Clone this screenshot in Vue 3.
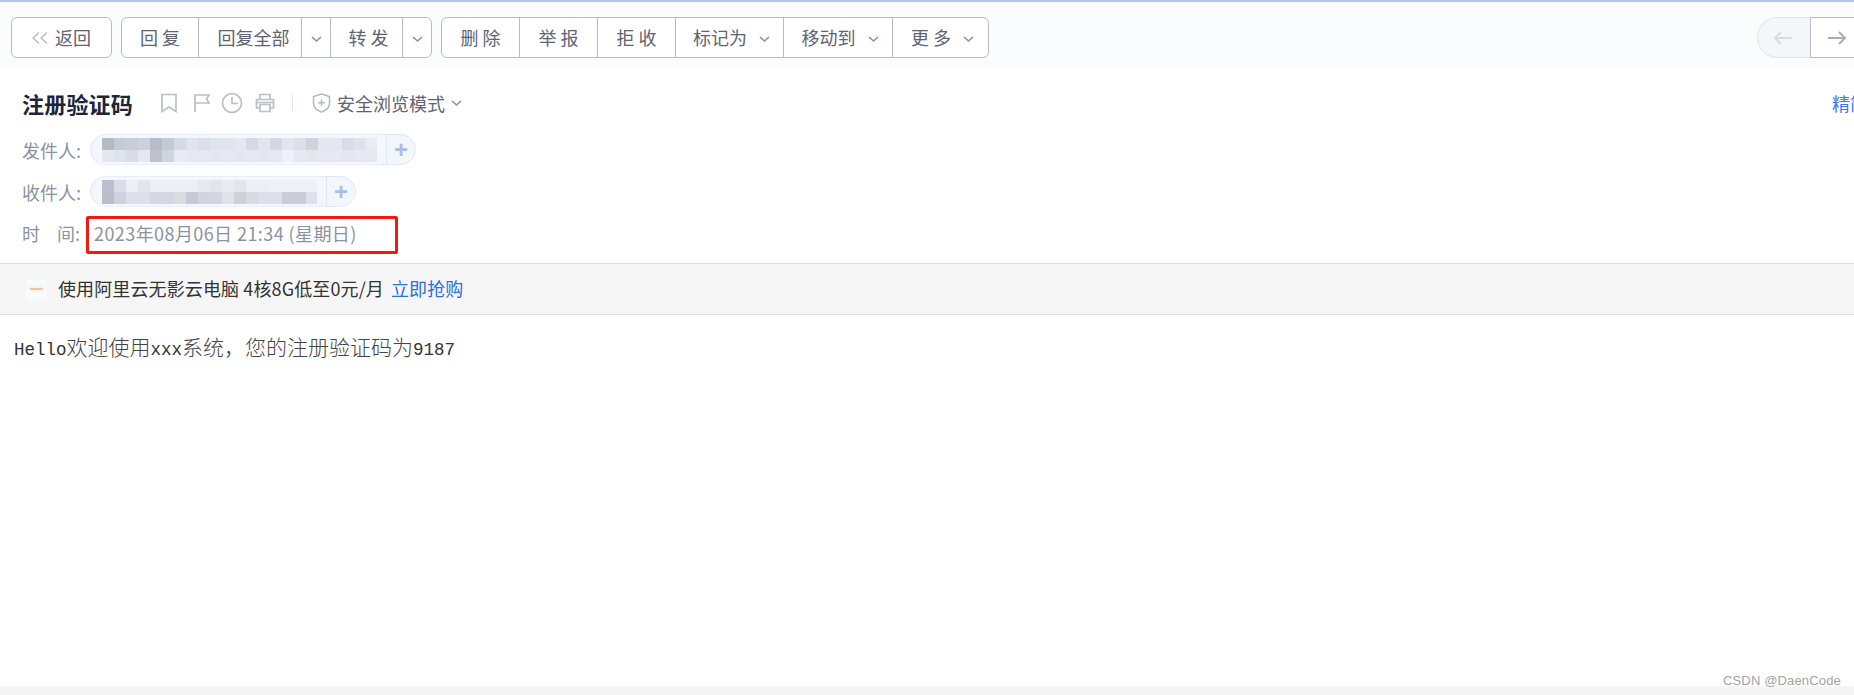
<script setup>
const chevron = 'M1 1l4.5 4L10 1'
const group1 = [
  { t: '回 复', w: 77 },
  { t: '回复全部', w: 103, pad: 7 },
  { w: 29, icon: true },
  { t: '转 发', w: 72, pad: 4 },
  { w: 28, icon: true }
]
const group2 = [
  { t: '删 除', w: 78 },
  { t: '举 报', w: 78 },
  { t: '拒 收', w: 78 },
  { t: '标记为', w: 108, arrow: true, pad: 4 },
  { t: '移动到', w: 109, arrow: true, pad: 4 },
  { t: '更 多', w: 95, arrow: true, pad: 4 }
]
const senderRows = [
  ['b5b9c6','c6cad6','c9cdd9','cdd1dc','b8bcca','c5c9d6','d6dae5','e0e4ed','dcdfe9','e0e4ed','e0e4ed','e4e7ef','d6d9e3','e0e4ed','d5d8e2','e2e5ee','dcdfe8','d0d3de','e4e7f0','e4e7f0','d9dce6','e0e3ec','e9ecf4'],
  ['e5e8f1','dfe3ed','d8dce7','e5e8f1','bdc1cd','d0d4df','e8ebf3','e6e9f2','e6e9f2','e4e7f0','e6e9f2','e4e7f0','e6e9f2','e4e7f0','e6e9f2','eef1f8','e6e9f2','e4e7f0','e6e9f2','e6e9f2','e4e7f0','e6e9f2','e6e9f2']
]
const receiverRows = [
  ['bcc0cc','dadde7','eceff6','e2e5ee','eceff6','eceff6','eceff6','eceff6','e6e9f2','e2e5ee','e8ebf3','e2e5ee','eceff6','eceff6','eef1f8','eef1f8','eef1f8','eef1f8'],
  ['b9bdc9','ced2dc','dde0ea','dde0ea','d5d8e2','d5d8e2','d8dcdf','c6cad5','d0d4de','d2d6e0','e0e3ec','cdd1db','d6dae3','dde0ea','dde0ea','c9cdd8','c9cdd8','dfe2ec']
]
const cellColor = (c) => ({ background: '#' + c })
const cellStyle = (b) => ({ width: b.w + 'px', paddingLeft: (b.pad || 0) + 'px' })
</script>

<template>
  <div class="page">
    <div class="toolbar">
      <button class="btn back">
        <svg class="back-mark" width="16" height="12" viewBox="0 0 16 12"><path d="M7 .5L1 6l6 5.500M15 .5L9 6l6 5.500" /></svg>
        <span>返回</span>
      </button>
      <div class="group">
        <div
          v-for="b in group1"
          :key="b.t || b.w"
          class="cell"
          :style="cellStyle(b)"
        >
          <svg v-if="b.icon" class="chev" width="11" height="7" viewBox="0 0 11 7"><path :d="chevron" /></svg>
          <template v-else>{{ b.t }}</template>
        </div>
      </div>
      <div class="group">
        <div
          v-for="b in group2"
          :key="b.t"
          class="cell"
          :style="cellStyle(b)"
        >
          <span>{{ b.t }}</span>
          <svg v-if="b.arrow" class="chev" width="11" height="7" viewBox="0 0 11 7"><path :d="chevron" /></svg>
        </div>
      </div>
      <div class="pager">
        <div class="prev">
          <svg width="20" height="16" viewBox="0 0 20 16"><path d="M19 8H2M8 2L2 8l6 6" /></svg>
        </div>
        <div class="next">
          <svg width="20" height="16" viewBox="0 0 20 16"><path d="M1 8h17M12 2l6 6-6 6" /></svg>
        </div>
      </div>
    </div>

    <div class="head">
      <div class="title-row">
        <h1 class="title">注册验证码</h1>
        <svg class="ic bookmark" width="18" height="20" viewBox="0 0 18 20"><path d="M2 1.500h14v17l-7-4.500-7 4.500z" /></svg>
        <svg class="ic flag" width="18" height="20" viewBox="0 0 18 20"><path d="M2 19V2h14l-2.500 4L16 10H2" /></svg>
        <svg class="ic clock" width="22" height="22" viewBox="0 0 22 22"><circle cx="11" cy="11" r="9.500" /><path d="M11 5v6.500h6" /></svg>
        <svg class="ic printer" width="20" height="20" viewBox="0 0 20 20"><path d="M5 6V1.500h10V6M5 15H1.500V6.500h17V15H15M5 11.500h10v7H5zM1.500 9.500h17" /></svg>
        <span class="sep"></span>
        <svg class="shield" width="19" height="20" viewBox="0 0 19 20"><path d="M9.500 1l8 2.500v7c0 4-3.500 7-8 8.500-4.500-1.500-8-4.500-8-8.500v-7zM9.500 6.500v6.500M6.250 9.750h6.500" /></svg>
        <span class="safe">安全浏览模式</span>
        <svg class="chev safe-chev" width="11" height="7" viewBox="0 0 11 7"><path :d="chevron" /></svg>
        <a class="simple">精简信息</a>
      </div>

      <div class="meta sender">
        <span class="label">发件人:</span>
        <div class="pill">
          <div class="mosaic">
            <div v-for="(row, r) in senderRows" :key="r" class="mrow">
              <i v-for="(c, i) in row" :key="i" :style="cellColor(c)"></i>
            </div>
          </div>
          <span class="plus">+</span>
        </div>
      </div>
      <div class="meta receiver">
        <span class="label">收件人:</span>
        <div class="pill short">
          <div class="mosaic">
            <div v-for="(row, r) in receiverRows" :key="r" class="mrow">
              <i v-for="(c, i) in row" :key="i" :style="cellColor(c)"></i>
            </div>
          </div>
          <span class="plus">+</span>
        </div>
      </div>
      <div class="meta time">
        <span class="label spaced"><span>时</span><span>间:</span></span>
        <span class="when">2023年08月06日 21:34 (星期日)</span>
        <span class="redbox"></span>
      </div>
    </div>

    <div class="ad">
      <span class="ad-logo"><i></i></span>
      <span>使用阿里云无影云电脑 4核8G低至0元/月</span>
      <a class="ad-link">立即抢购</a>
    </div>

    <div class="body-text">
      <span class="m">Hello</span><span class="c">欢迎使用</span><span class="m">xxx</span><span class="c">系统，您的注册验证码为</span><span class="m">9187</span>
    </div>

    <div class="scroll"></div>
    <div class="mark">CSDN @DaenCode</div>
  </div>
</template>

<style scoped>
.page {
  position: relative;
  width: 1854px;
  height: 695px;
  overflow: hidden;
  background: #fff;
  display: flex;
  flex-direction: column;
  font-family: "Noto Sans CJK SC", "Liberation Sans", sans-serif;
  font-size: 18px;
}
.toolbar {
  flex: none;
  box-sizing: border-box;
  border-top: 2px solid #aec4ee;
  height: 70px;
  background: #fbfcfe;
  padding: 15px 0 0 11px;
  display: flex;
  gap: 9px;
  align-items: flex-start;
}
.btn, .group {
  height: 41px;
  box-sizing: border-box;
  border: 1px solid #b6bbc8;
  border-radius: 6px;
  background: #fff;
  color: #5e6473;
  font: inherit;
  line-height: 1;
}
.back {
  width: 101px;
  padding: 0 0 2px 0;
  display: flex;
  align-items: center;
  justify-content: center;
  gap: 7px;
}
.back-mark {
  margin-top: 2px;
}
.back-mark path {
  fill: none;
  stroke: #b0b5c2;
  stroke-width: 1.2;
}
.group {
  display: flex;
}
.cell {
  box-sizing: border-box;
  display: flex;
  align-items: center;
  justify-content: center;
  gap: 12px;
  border-right: 1px solid #b6bbc8;
  white-space: pre;
  padding-bottom: 2px;
}
.cell:last-child {
  border-right: none;
}
.chev path {
  fill: none;
  stroke: #8c919e;
  stroke-width: 1.6;
}
.cell .chev {
  margin-top: 5px;
}
.pager {
  margin-left: auto;
  margin-right: -24px;
  display: flex;
  height: 41px;
}
.pager path {
  fill: none;
  stroke-width: 2;
}
.prev {
  width: 53px;
  box-sizing: border-box;
  border: 1px solid #e1e4ea;
  border-right: none;
  border-radius: 21px 0 0 21px;
  background: #f5f6fa;
  display: flex;
  align-items: center;
  justify-content: flex-end;
  padding-right: 17px;
}
.prev path {
  stroke: #d9dbe1;
}
.next {
  width: 68px;
  box-sizing: border-box;
  border: 1px solid #b6bbc8;
  border-radius: 0 21px 21px 0;
  background: #fff;
  display: flex;
  align-items: center;
  padding-left: 16px;
}
.next path {
  stroke: #a9adb8;
}
.head {
  height: 193px;
  flex: none;
  padding-left: 22px;
  box-sizing: border-box;
}
.title-row {
  height: 30px;
  margin-top: 18px;
  display: flex;
  align-items: center;
}
.title {
  margin: 0;
  font-size: 22px;
  line-height: 30px;
  font-weight: 700;
  letter-spacing: 0.2px;
  color: #1e2538;
}
.ic {
  flex: none;
}
.ic path, .ic circle {
  fill: none;
  stroke: #bcbfc7;
  stroke-width: 1.7;
}
.bookmark { margin-left: 27px; }
.flag { margin-left: 15px; }
.clock { margin-left: 10px; }
.printer { margin-left: 12px; }
.sep {
  width: 1px;
  height: 16px;
  margin-left: 17px;
  background: #dfe3ec;
}
.shield {
  margin-left: 19px;
}
.shield path {
  fill: none;
  stroke: #b4b7bf;
  stroke-width: 1.5;
}
.safe {
  margin-left: 6px;
  color: #5e6473;
}
.safe-chev {
  margin-left: 6px;
}
.simple {
  position: absolute;
  left: 1832px;
  top: 88px;
  line-height: 30px;
  color: #3f76f2;
  white-space: nowrap;
}
.meta {
  display: flex;
  align-items: center;
  position: relative;
  color: #8b92a2;
}
.sender { margin-top: 16px; }
.receiver { margin-top: 11px; }
.time {
  margin-top: 9px;
  height: 38px;
  box-sizing: border-box;
  padding-bottom: 5px;
}
.label {
  width: 68px;
  flex: none;
  white-space: nowrap;
}
.spaced {
  display: flex;
}
.spaced span:first-child {
  width: 35px;
}
.pill {
  width: 326px;
  height: 31px;
  box-sizing: border-box;
  border: 1px solid #dfe6f5;
  border-radius: 16px;
  background: #f3f6fd;
  display: flex;
  align-items: center;
  padding-left: 11px;
}
.pill.short {
  width: 266px;
}
.mosaic {
  flex: 1;
  box-shadow: 0 0 6px 3px #f6f8fe;
  height: 24px;
  overflow: hidden;
  margin-right: 9px;
}
.mrow {
  display: flex;
  height: 12px;
}
.mrow i {
  flex: none;
  width: 12px;
  height: 12px;
}
.plus {
  width: 28px;
  align-self: stretch;
  flex: none;
  border-left: 1px solid #dfe6f5;
  display: flex;
  align-items: center;
  justify-content: center;
  color: #a9bde8;
  font: 700 24px/1 "Liberation Sans", sans-serif;
}
.when {
  margin-left: 4px;
  white-space: nowrap;
  letter-spacing: 0.42px;
}
.redbox {
  position: absolute;
  left: 64px;
  top: 0;
  width: 312px;
  height: 38px;
  box-sizing: border-box;
  border: 3px solid #f01a10;
  border-radius: 2px;
}
.ad {
  height: 52px;
  flex: none;
  box-sizing: border-box;
  border-top: 1px solid #dfdfdf;
  border-bottom: 1px solid #dfdfdf;
  background: #f6f6f6;
  display: flex;
  align-items: center;
  padding: 0 0 2px 26px;
  color: #333;
  white-space: pre;
  letter-spacing: 0.12px;
}
.ad-logo {
  width: 21px;
  height: 21px;
  margin: 2px 11px 0 0;
  background: #f6fcfc;
  display: flex;
  align-items: center;
  justify-content: center;
}
.ad-logo i {
  width: 13px;
  height: 2px;
  background: #f3c3a3;
  box-shadow: 0 0 3px 1px #fbeadc;
}
.ad-link {
  margin-left: 7px;
  color: #2b6fe0;
}
.body-text {
  margin: 16px 0 0 14px;
  height: 30px;
  line-height: 30px;
  color: #333;
  white-space: nowrap;
  display: flex;
  align-items: baseline;
}
.m {
  font: 17.500px/30px "Liberation Mono", monospace;
}
.c {
  font: 300 21px/30px "Noto Sans CJK SC", serif;
  color: #444;
}
.scroll {
  position: absolute;
  left: 0;
  right: 0;
  bottom: 0;
  height: 9px;
  background: #f5f5f5;
}
.mark {
  position: absolute;
  left: 1723px;
  top: 673px;
  font: 13px/16px "Liberation Sans", sans-serif;
  color: #a3a3a3;
  letter-spacing: 0.15px;
  white-space: nowrap;
}
</style>
